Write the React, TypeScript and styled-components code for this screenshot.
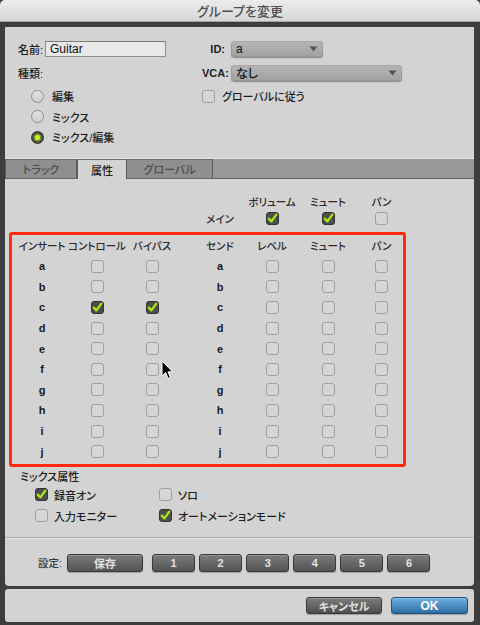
import React from 'react';
import styled, { createGlobalStyle } from 'styled-components';

const GlobalStyle = createGlobalStyle`
  html, body { margin: 0; padding: 0; background: #3c3c3c; }
  body {
    font-family: "Liberation Sans", "Noto Sans CJK JP", sans-serif;
    font-feature-settings: "palt";
    -webkit-font-smoothing: antialiased;
  }
  #root { width: 480px; height: 625px; }
  * { box-sizing: border-box; }
`;

const Window = styled.div`
  width: 480px;
  height: 625px;
  display: flex;
  flex-direction: column;
  background: #3d3d3d;
  overflow: hidden;
`;

const TitleBar = styled.div`
  flex: none;
  height: 22px;
  display: flex;
  align-items: center;
  justify-content: center;
  background: linear-gradient(#ececec, #d6d6d6);
  border-bottom: 1px solid #a5a5a5;
  border-radius: 5px 5px 0 0;
  font-family: "Noto Sans CJK JP", sans-serif;
  font-size: 13px;
  font-weight: 500;
  color: #4e4e4e;
`;

const Body = styled.div`
  flex: 1;
  display: flex;
  flex-direction: column;
  gap: 3px;
  padding: 5px 6px 3px 5px;
`;

const MainPanel = styled.div`
  position: relative;
  height: 559px;
  flex: none;
  display: flex;
  flex-direction: column;
  background: #d3d3d3;
  border-radius: 0 0 4px 4px;
`;

const TopSection = styled.div`
  display: grid;
  grid-template-columns: 184px 1fr;
  height: 131px;
  padding: 14px 0 0 13px;
`;

const Column = styled.div`
  display: flex;
  flex-direction: column;
`;

const FormRow = styled.div<{ $h: number; $mt?: number }>`
  display: flex;
  align-items: center;
  height: ${p => p.$h}px;
  margin-top: ${p => p.$mt ?? 0}px;
`;

const Label = styled.span<{ $w?: number; $right?: boolean }>`
  font-size: 11px;
  font-weight: 500;
  color: #1e1e1e;
  white-space: nowrap;
  ${p => (p.$w ? `width: ${p.$w}px; flex: none;` : '')}
  ${p => (p.$right ? 'text-align: right;' : '')}
`;

const BoldLabel = styled(Label)`
  font-weight: bold;
`;

const TextInput = styled.div`
  width: 121px;
  height: 16px;
  margin-left: 5px;
  background: #e8e8e8;
  border: 1px solid #8d8d8d;
  border-top-color: #7a7a7a;
  padding-left: 4px;
  display: flex;
  align-items: center;
  font-size: 12px;
  color: #111;
`;

const Select = styled.div<{ $w: number }>`
  width: ${p => p.$w}px;
  height: 16px;
  margin-left: 6px;
  border-radius: 3px;
  background: linear-gradient(#b6b6b6, #a1a1a1);
  box-shadow: 0 1px 1px rgba(0, 0, 0, 0.35), inset 0 0 0 1px rgba(0, 0, 0, 0.08);
  display: flex;
  align-items: center;
  justify-content: space-between;
  padding: 0 5px 0 5px;
  font-size: 12px;
  font-weight: 500;
  color: #111;
`;

const RadioList = styled.div`
  display: flex;
  flex-direction: column;
  margin-top: 6px;
  padding-left: 13px;
`;

const RadioRow = styled.div`
  display: flex;
  align-items: center;
  gap: 8px;
  height: 20.5px;
`;

const RadioCircle = styled.span<{ $on?: boolean }>`
  width: 13px;
  height: 13px;
  border-radius: 50%;
  flex: none;
  display: flex;
  align-items: center;
  justify-content: center;
  border: 1px solid ${p => (p.$on ? '#2e2e2e' : '#8e8e8e')};
  background: ${p => (p.$on ? 'radial-gradient(#5a5a5a, #3a3a3a)' : 'linear-gradient(#e2e2e2, #cfcfcf)')};
  &::after {
    content: '';
    display: ${p => (p.$on ? 'block' : 'none')};
    width: 5px;
    height: 5px;
    border-radius: 50%;
    background: #c2f51a;
    box-shadow: 0 0 2px 1px rgba(170, 240, 20, 0.7);
  }
`;

const CheckRow = styled.div`
  display: flex;
  align-items: center;
  gap: 7px;
  height: 20.5px;
  margin-top: 6px;
`;

const Box = styled.span<{ $on?: boolean }>`
  width: 13px;
  height: 13px;
  flex: none;
  border-radius: 3px;
  display: inline-flex;
  align-items: center;
  justify-content: center;
  border: 1.5px solid ${p => (p.$on ? '#333' : '#a0a0a0')};
  background: ${p => (p.$on ? '#4d4d4d' : '#d6d6d6')};
  overflow: visible;
`;

const TabBar = styled.div`
  display: flex;
  height: 21px;
  flex: none;
  background: #999;
  border-top: 1px solid #e6e6e6;
  border-bottom: 1px solid #666;
`;

const Tab = styled.div<{ $active?: boolean; $w: number }>`
  width: ${p => p.$w}px;
  display: flex;
  align-items: center;
  justify-content: center;
  font-size: 11px;
  font-weight: 500;
  color: ${p => (p.$active ? '#1e1e1e' : '#4c4c4c')};
  background: ${p => (p.$active ? '#d3d3d3' : '#8f8f8f')};
  border-top: 1px solid #6a6a6a;
  border-left: ${p => (p.$active ? '1px solid #5c5c5c' : 'none')};
  border-right: 1px solid #5c5c5c;
  margin-bottom: ${p => (p.$active ? '-1px' : '0')};
  &:first-child { border-left: 1px solid #5c5c5c; }
`;

const TabContent = styled.div`
  flex: 1;
  display: flex;
  flex-direction: column;
  padding: 15px 4px 0 4px;
`;

const Grid = styled.div<{ $cols: string; $head: number; $row: number }>`
  display: grid;
  grid-template-columns: ${p => p.$cols};
  grid-template-rows: ${p => p.$head}px;
  grid-auto-rows: ${p => p.$row}px;
`;

const MainGrid = styled(Grid)`
  margin-left: 183px;
`;

const Cell = styled.div<{ $bold?: boolean }>`
  display: flex;
  align-items: center;
  justify-content: center;
  white-space: nowrap;
  font-size: ${p => (p.$bold ? 11 : 10.5)}px;
  font-weight: ${p => (p.$bold ? 'bold' : 500)};
  color: ${p => (p.$bold ? '#1a1a1a' : '#2a2a2a')};
`;

const RedBox = styled.div`
  margin-top: 3px;
  width: 397px;
  border: 3px solid #fd2a0c;
  border-radius: 3px;
  padding-bottom: 2px;
  display: flex;
  gap: 10px;
`;

const SectionTitle = styled.div`
  margin-top: 3px;
  padding-left: 11px;
  height: 14px;
  line-height: 14px;
  font-size: 11px;
  font-weight: 500;
  color: #1e1e1e;
`;

const OptionGrid = styled.div`
  display: grid;
  grid-template-columns: 124px auto;
  grid-auto-rows: 21px;
  margin-top: 0.5px;
  padding-left: 25.5px;
`;

const Option = styled.div`
  display: flex;
  align-items: center;
  gap: 6.5px;
  font-size: 11px;
  font-weight: 500;
  color: #1e1e1e;
`;

const Separator = styled.div`
  height: 2px;
  flex: none;
  border-top: 1px solid #b2b2b2;
  border-bottom: 1px solid #e4e4e4;
`;

const SettingsRow = styled.div`
  height: 47px;
  flex: none;
  display: flex;
  align-items: center;
  padding-left: 33px;
`;

const SettingsLabel = styled.span`
  width: 29px;
  flex: none;
  font-size: 10.5px;
  font-weight: 500;
  color: #3a3a3a;
  white-space: nowrap;
`;

const DarkButton = styled.div<{ $w: number }>`
  width: ${p => p.$w}px;
  height: 18px;
  flex: none;
  border-radius: 3px;
  display: flex;
  align-items: center;
  justify-content: center;
  background: linear-gradient(#7c7c7c, #535353);
  border: 1px solid #3a3a3a;
  box-shadow: inset 0 1px 0 rgba(255, 255, 255, 0.18), 0 1px 1px rgba(0, 0, 0, 0.25);
  font-size: 11px;
  font-weight: bold;
  color: #e2e2e2;
`;

const ButtonGroup = styled.div`
  display: flex;
  gap: 4.1px;
  margin-left: 9px;
`;

const Footer = styled.div`
  height: 33px;
  flex: none;
  background: #d3d3d3;
  border-radius: 3px;
  display: flex;
  justify-content: flex-end;
  align-items: flex-start;
  gap: 9px;
  padding: 8px 6px 0 0;
`;

const FooterButton = styled.div<{ $primary?: boolean; $w: number }>`
  width: ${p => p.$w}px;
  height: 17px;
  border-radius: 3px;
  display: flex;
  align-items: center;
  justify-content: center;
  font-size: ${p => (p.$primary ? 12 : 11)}px;
  font-weight: bold;
  color: ${p => (p.$primary ? '#fff' : '#e0e0e0')};
  background: ${p => (p.$primary ? 'linear-gradient(#6fb0e0, #2f6ea6)' : 'linear-gradient(#7c7c7c, #4f4f4f)')};
  border: 1px solid ${p => (p.$primary ? '#23527f' : '#383838')};
  box-shadow: inset 0 1px 0 rgba(255, 255, 255, 0.2), 0 1px 1px rgba(0, 0, 0, 0.25);
`;

const Cursor = styled.svg`
  position: absolute;
  left: 156px;
  top: 333px;
`;

const Arrow = () => (
  <svg width="9" height="6" viewBox="0 0 9 6">
    <path d="M0.5 0.5 L8.5 0.5 L4.5 5.5 Z" fill="#555" />
  </svg>
);

const Check = ({ on }: { on?: boolean }) => (
  <Box $on={on}>
    {on && (
      <svg width="11" height="11" viewBox="0 0 11 11" style={{ overflow: 'visible' }}>
        <path d="M1.8 5.6 L4.4 8.4 L9.3 1.6" fill="none" stroke="#a8ea10" strokeWidth="2.3" strokeLinecap="round" strokeLinejoin="round" />
      </svg>
    )}
  </Box>
);

const letters = ['a', 'b', 'c', 'd', 'e', 'f', 'g', 'h', 'i', 'j'];
const INSERT_COLS = '60px 50px 60px';
const SEND_COLS = '56px 48px 64px 43px';

export default function App() {
  return (
    <>
      <GlobalStyle />
      <Window>
        <TitleBar>グループを変更</TitleBar>
        <Body>
          <MainPanel>
            <TopSection>
              <Column>
                <FormRow $h={16}>
                  <Label $w={22}>名前:</Label>
                  <TextInput>Guitar</TextInput>
                </FormRow>
                <FormRow $h={15} $mt={8}>
                  <Label>種類:</Label>
                </FormRow>
                <RadioList>
                  <RadioRow><RadioCircle /><Label>編集</Label></RadioRow>
                  <RadioRow><RadioCircle /><Label>ミックス</Label></RadioRow>
                  <RadioRow><RadioCircle $on /><Label>ミックス/編集</Label></RadioRow>
                </RadioList>
              </Column>
              <Column>
                <FormRow $h={16}>
                  <BoldLabel $w={23} $right>ID:</BoldLabel>
                  <Select $w={92}>a<Arrow /></Select>
                </FormRow>
                <FormRow $h={15} $mt={8}>
                  <BoldLabel $w={23} $right>VCA:</BoldLabel>
                  <Select $w={171}>なし<Arrow /></Select>
                </FormRow>
                <CheckRow>
                  <Check />
                  <Label>グローバルに従う</Label>
                </CheckRow>
              </Column>
            </TopSection>

            <TabBar>
              <Tab $w={72}>トラック</Tab>
              <Tab $w={50} $active>属性</Tab>
              <Tab $w={86}>グローバル</Tab>
            </TabBar>

            <TabContent>
              <MainGrid $cols={SEND_COLS} $head={14} $row={21}>
                <Cell />
                <Cell>ボリューム</Cell>
                <Cell>ミュート</Cell>
                <Cell>パン</Cell>
                <Cell>メイン</Cell>
                <Cell><Check on /></Cell>
                <Cell><Check on /></Cell>
                <Cell><Check /></Cell>
              </MainGrid>

              <RedBox>
                <Grid $cols={INSERT_COLS} $head={21} $row={20.6}>
                  <Cell>インサート</Cell>
                  <Cell>コントロール</Cell>
                  <Cell>バイパス</Cell>
                  {letters.map(l => (
                    <React.Fragment key={l}>
                      <Cell $bold>{l}</Cell>
                      <Cell><Check on={l === 'c'} /></Cell>
                      <Cell><Check on={l === 'c'} /></Cell>
                    </React.Fragment>
                  ))}
                </Grid>
                <Grid $cols={SEND_COLS} $head={21} $row={20.6}>
                  <Cell>センド</Cell>
                  <Cell>レベル</Cell>
                  <Cell>ミュート</Cell>
                  <Cell>パン</Cell>
                  {letters.map(l => (
                    <React.Fragment key={l}>
                      <Cell $bold>{l}</Cell>
                      <Cell><Check /></Cell>
                      <Cell><Check /></Cell>
                      <Cell><Check /></Cell>
                    </React.Fragment>
                  ))}
                </Grid>
              </RedBox>

              <SectionTitle>ミックス属性</SectionTitle>
              <OptionGrid>
                <Option><Check on />録音オン</Option>
                <Option><Check />ソロ</Option>
                <Option><Check />入力モニター</Option>
                <Option><Check on />オートメーションモード</Option>
              </OptionGrid>
            </TabContent>

            <Separator />

            <SettingsRow>
              <SettingsLabel>設定:</SettingsLabel>
              <DarkButton $w={76}>保存</DarkButton>
              <ButtonGroup>
                {[1, 2, 3, 4, 5, 6].map(n => (
                  <DarkButton key={n} $w={43}>{n}</DarkButton>
                ))}
              </ButtonGroup>
            </SettingsRow>

            <Cursor width="13" height="20" viewBox="0 0 13 20">
              <path d="M1 1 L1 16 L4.6 12.6 L7.2 18.4 L9.4 17.4 L6.9 11.8 L11.6 11.8 Z" fill="#000" stroke="#fff" strokeWidth="1" strokeLinejoin="round" />
            </Cursor>
          </MainPanel>

          <Footer>
            <FooterButton $w={76}>キャンセル</FooterButton>
            <FooterButton $w={77} $primary>OK</FooterButton>
          </Footer>
        </Body>
      </Window>
    </>
  );
}
